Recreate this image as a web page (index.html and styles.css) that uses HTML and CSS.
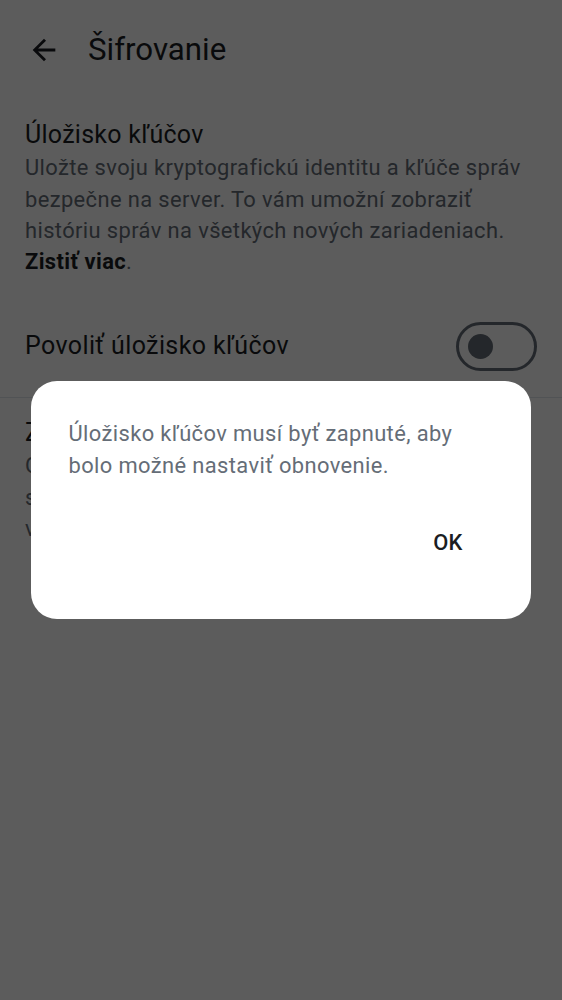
FILE: index.html
```html
<!DOCTYPE html>
<html lang="sk">
<head>
<meta charset="utf-8">
<title>Šifrovanie</title>
<link rel="stylesheet" href="styles.css">
</head>
<body>
<div class="screen">
  <header class="topbar">
    <button class="back" aria-label="Späť">
      <svg viewBox="0 0 24 24" width="34" height="34"><path d="M20 11H7.83l5.59-5.59L12 4l-8 8 8 8 1.41-1.41L7.83 13H20v-2z" fill="#1b1d22"/></svg>
    </button>
    <h1 class="title">Šifrovanie</h1>
  </header>

  <section class="section">
    <h2 class="sec-title">Úložisko kľúčov</h2>
    <p class="sec-desc">Uložte svoju kryptografickú identitu a kľúče správ bezpečne na server. To vám umožní zobraziť históriu správ na všetkých nových zariadeniach. <b class="link">Zistiť viac</b>.</p>
    <div class="row">
      <span class="row-label">Povoliť úložisko kľúčov</span>
      <span class="switch"><span class="knob"></span></span>
    </div>
  </section>

  <hr class="divider">

  <section class="section second">
    <h2 class="sec-title">Zapnúť obnovenie</h2>
    <p class="sec-desc">Obnovte svoju kryptografickú identitu a históriu správ pomocou kľúča na obnovenie, ak stratíte všetky svoje zariadenia.</p>
  </section>
</div>

<div class="scrim">
  <div class="dialog" role="dialog">
    <p class="dialog-text">Úložisko kľúčov musí byť zapnuté, aby bolo možné nastaviť obnovenie.</p>
    <div class="dialog-actions">
      <button class="btn-ok">OK</button>
    </div>
  </div>
</div>
</body>
</html>
```

FILE: styles.css
```css
* { box-sizing: border-box; }

html, body {
  margin: 0;
  padding: 0;
}

body {
  width: 562px;
  height: 1000px;
  background: #ffffff;
  font-family: Roboto, "Noto Sans", "Liberation Sans", sans-serif;
  color: #1b1d22;
  overflow: hidden;
  position: relative;
}

.screen {
  display: flex;
  flex-direction: column;
}

.topbar {
  height: 100px;
  display: flex;
  align-items: center;
}

.back {
  border: 0;
  background: none;
  padding: 0;
  margin: 0 0 0 27px;
  width: 34px;
  height: 34px;
  display: flex;
}

.title {
  margin: 0 0 0 27px;
  font-size: 31.25px;
  font-weight: 400;
  line-height: 40px;
  color: #1b1d22;
}

.section {
  padding: 18px 25px 0 25px;
}

.sec-title {
  margin: 0;
  font-size: 25px;
  font-weight: 400;
  line-height: 34.4px;
  letter-spacing: 0.27px;
  color: #1b1d22;
}

.sec-desc {
  margin: 0;
  font-size: 21.9px;
  line-height: 31.25px;
  letter-spacing: 0.39px;
  color: #656d77;
}

.link {
  font-weight: 700;
  color: #1b1d22;
}

.row {
  margin-top: 44.6px;
  margin-bottom: 26px;
  margin-right: 0;
  display: flex;
  align-items: center;
  justify-content: space-between;
  height: 49px;
}

.row-label {
  font-size: 25px;
  line-height: 34.4px;
  letter-spacing: 0.39px;
  color: #1b1d22;
}

.switch {
  width: 81px;
  height: 49px;
  border: 3px solid #656d77;
  border-radius: 25px;
  display: flex;
  align-items: center;
  padding-left: 9px;
}

.knob {
  width: 25px;
  height: 25px;
  border-radius: 50%;
  background: #656d77;
}

.divider {
  margin: 0;
  border: 0;
  height: 1px;
  background: #e1e6ec;
}

.second {
  padding-top: 18px;
}

.scrim {
  position: absolute;
  inset: 0;
  background: rgba(0, 0, 0, 0.64);
  padding: 381px 31px 0 31px;
}

.dialog {
  background: #ffffff;
  border-radius: 26px;
  height: 238px;
  padding: 37.4px 37.5px 0 37.5px;
  display: flex;
  flex-direction: column;
}

.dialog-text {
  margin: 0;
  font-size: 21.9px;
  line-height: 31.25px;
  letter-spacing: 0.39px;
  color: #656d77;
}

.dialog-actions {
  margin-top: 38px;
  display: flex;
  justify-content: flex-end;
}

.btn-ok {
  border: 0;
  background: none;
  font-family: Roboto, "Noto Sans", "Liberation Sans", sans-serif;
  font-size: 21.9px;
  font-weight: 500;
  letter-spacing: 0.2px;
  color: #1b1d22;
  height: 48px;
  padding: 0 32px 0 31px;
  margin-right: -1px;
}
```
